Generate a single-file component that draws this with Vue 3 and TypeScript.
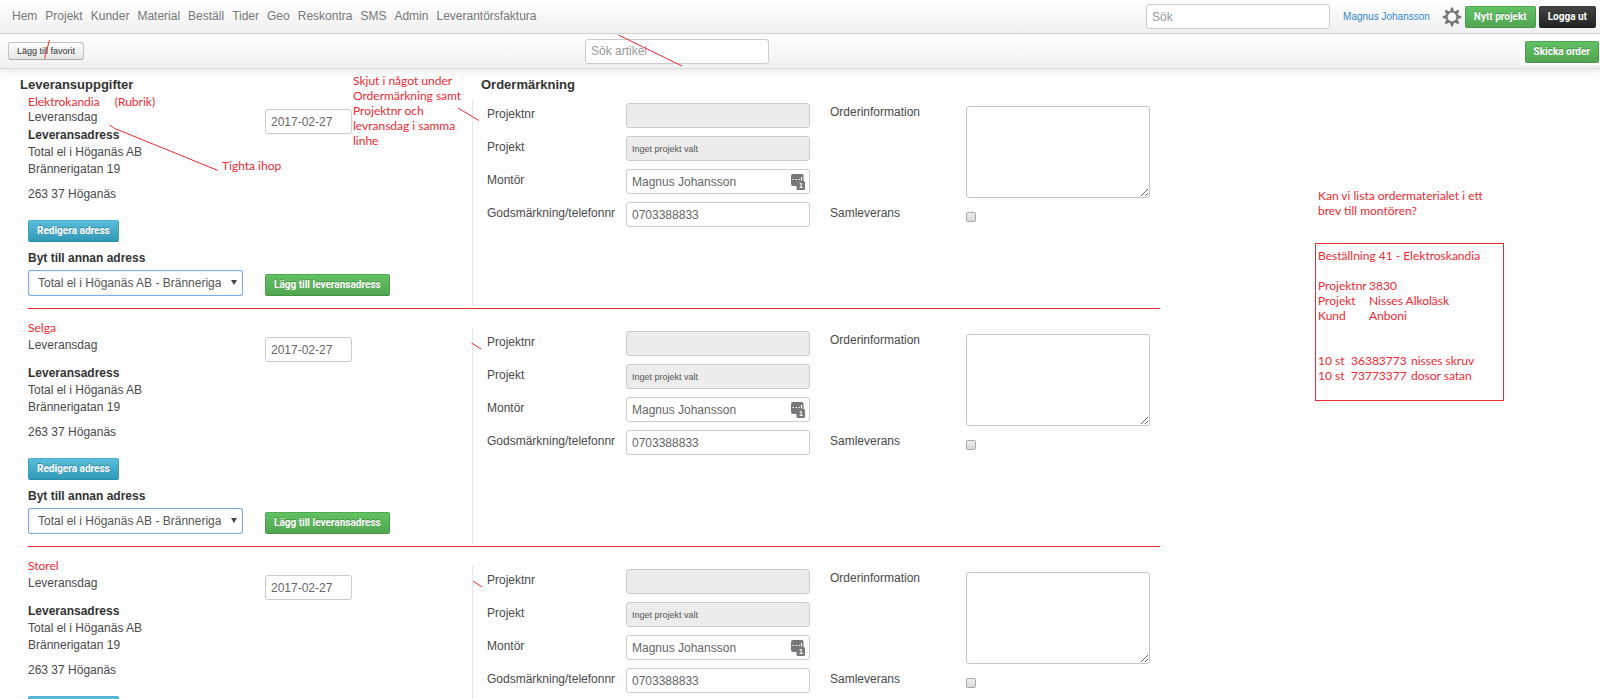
<script setup lang="ts">
interface Order {
  id: string
  supplier: string
  remark?: string
  compact: boolean
}

const menu: string[] = [
  'Hem', 'Projekt', 'Kunder', 'Material', 'Beställ', 'Tider',
  'Geo', 'Reskontra', 'SMS', 'Admin', 'Leverantörsfaktura',
]

const orders: Order[] = [
  { id: 'o1', supplier: 'Elektrokandia', remark: '(Rubrik)', compact: true },
  { id: 'o2', supplier: 'Selga', compact: false },
  { id: 'o3', supplier: 'Storel', compact: false },
]

const letterHead: [string, string][] = [
  ['Projektnr', '3830'],
  ['Projekt', 'Nisses Alkoläsk'],
  ['Kund', 'Anboni'],
]

const letterRows: [string, string, string][] = [
  ['10 st', '36383773', 'nisses skruv'],
  ['10 st', '73773377', 'dosor satan'],
]
</script>

<template>
  <div class="page">
    <header class="top">
      <div class="bar">
        <nav class="menu">
          <a v-for="item in menu" :key="item" href="#">{{ item }}</a>
        </nav>
        <div class="account">
          <input class="field search" type="text" placeholder="Sök" aria-label="Sök" />
          <a class="user" href="#">Magnus Johansson</a>
          <button class="gear" type="button" aria-label="Inställningar">
            <svg viewBox="0 0 20 20" width="20" height="20">
              <g fill="#777">
                <path
                  v-for="n in 8"
                  :key="n"
                  d="M7.800 4.600 L9.200 .6 h1.600 L12.200 4.600 Z"
                  :transform="`rotate(${n * 45} 10 10)`"
                />
              </g>
              <circle cx="10" cy="10" r="5.3" fill="#fafafa" stroke="#777" stroke-width="1.8" />
            </svg>
          </button>
          <button class="btn green" type="button">Nytt projekt</button>
          <button class="btn dark" type="button">Logga ut</button>
        </div>
      </div>
      <div class="bar sub">
        <div class="side">
          <button class="favorite" type="button">Lägg till favorit</button>
        </div>
        <input class="field search" type="text" placeholder="Sök artikel" aria-label="Sök artikel" />
        <div class="send">
          <button class="btn green" type="button">Skicka order</button>
        </div>
      </div>
    </header>

    <div class="content">
      <main class="orders">
        <div class="headings">
          <h2>Leveransuppgifter</h2>
          <h2>Ordermärkning</h2>
        </div>

        <section
          v-for="order in orders"
          :key="order.id"
          class="order"
          :class="{ compact: order.compact }"
        >
          <div class="delivery">
            <div class="supplier note">
              <span>{{ order.supplier }}</span>
              <span v-if="order.remark">{{ order.remark }}</span>
            </div>
            <div class="details">
              <div class="address">
                <label class="day" :for="order.id + '-day'">Leveransdag</label>
                <h3>Leveransadress</h3>
                <p>Total el i Höganäs AB<br />Brännerigatan 19</p>
                <p class="city">263 37 Höganäs</p>
                <button class="btn blue" type="button">Redigera adress</button>
                <label class="change" :for="order.id + '-adr'">Byt till annan adress</label>
                <span class="picker">
                  <select :id="order.id + '-adr'">
                    <option>Total el i Höganäs AB - Brännerigatan 19</option>
                  </select>
                </span>
              </div>
              <div class="actions">
                <input :id="order.id + '-day'" class="field date" type="text" value="2017-02-27" />
                <button class="btn green" type="button">Lägg till leveransadress</button>
              </div>
            </div>
          </div>

          <div class="marking">
            <div class="fields">
              <label :for="order.id + '-nr'">Projektnr</label>
              <input :id="order.id + '-nr'" class="field" type="text" disabled />
              <label :for="order.id + '-project'">Projekt</label>
              <input :id="order.id + '-project'" class="field small" type="text" value="Inget projekt valt" disabled />
              <label :for="order.id + '-fitter'">Montör</label>
              <span class="filled">
                <input :id="order.id + '-fitter'" class="field" type="text" value="Magnus Johansson" />
                <svg class="fill" viewBox="0 0 14 16" width="14" height="16">
                  <path d="M2 0h9a1.500 1.500 0 0 1 1.500 1.500V7H6v5H2a2 2 0 0 1-2-2V2a2 2 0 0 1 2-2z" fill="#777" />
                  <path d="M1.500 5.500h1.500M4.500 5.500h1.500M7.500 5.500h1.500M10.500 3v3.500" stroke="#fff" stroke-width="1.200" />
                  <rect x="5.500" y="7" width="8.500" height="9" rx="1.500" fill="#777" />
                  <text x="10" y="14" text-anchor="middle">1</text>
                </svg>
              </span>
              <label :for="order.id + '-phone'">Godsmärkning/telefonnr</label>
              <input :id="order.id + '-phone'" class="field" type="text" value="0703388833" />
            </div>
            <div class="extra">
              <label :for="order.id + '-info'">Orderinformation</label>
              <textarea :id="order.id + '-info'"></textarea>
              <label :for="order.id + '-joint'">Samleverans</label>
              <input :id="order.id + '-joint'" class="check" type="checkbox" />
            </div>
          </div>
        </section>
      </main>

      <aside class="letter note">
        <p>Kan vi lista ordermaterialet i ett<br />brev till montören?</p>
        <div class="box">
          <p>Beställning 41 - Elektroskandia</p>
          <table class="head">
            <tbody>
              <tr v-for="row in letterHead" :key="row[0]">
                <th scope="row">{{ row[0] }}</th>
                <td>{{ row[1] }}</td>
              </tr>
            </tbody>
          </table>
          <table class="items">
            <tbody>
              <tr v-for="row in letterRows" :key="row[1]">
                <td v-for="cell in row" :key="cell">{{ cell }}</td>
              </tr>
            </tbody>
          </table>
        </div>
      </aside>
    </div>

    <!-- Review remarks drawn on top of the page -->
    <p class="remark move note">
      Skjut i något under<br />Ordermärkning samt<br />Projektnr och<br />levransdag i samma<br />linhe
    </p>
    <p class="remark tighten note">Tighta ihop</p>
    <svg class="strokes" width="700" height="600" viewBox="0 0 700 600" aria-hidden="true">
      <path
        d="M49.500 40L44.500 58.500M618.500 35L682 66M109.500 125Q114 129 121 131L218 170.500M458 108L479 120.500M471.500 343L481 349M473 581L482 587"
        fill="none"
        stroke="#ee2a33"
        stroke-width="1"
      />
    </svg>
  </div>
</template>

<style>
html {
  scrollbar-width: none;
}
body {
  margin: 0;
  background: #fefefe;
}
</style>

<style scoped>
.page {
  position: relative;
  font: 12px/17px "Liberation Sans", Arial, sans-serif;
  color: #4a4a4a;
}
.page *,
.page *::after {
  box-sizing: border-box;
}
p,
h2,
h3 {
  margin: 0;
}
a {
  text-decoration: none;
}
input,
select,
textarea,
button {
  margin: 0;
  font: inherit;
}

.top {
  position: relative;
  box-shadow: 0 1px 8px rgba(0, 0, 0, 0.12);
}
.bar {
  display: flex;
  align-items: center;
  justify-content: space-between;
  height: 34px;
  padding: 0 4px 0 12px;
  background: linear-gradient(#fff, #f0f0f0);
  border-bottom: 1px solid #d2d2d2;
}
.sub {
  height: 35px;
  justify-content: flex-start;
  padding: 0 0 0 8px;
  border-bottom-color: #dedede;
}
.menu {
  display: flex;
  gap: 8px;
}
.menu a {
  color: #777;
}
.account {
  display: flex;
  align-items: center;
  gap: 3px;
}
.user {
  margin: 0 9px 0 10px;
  font-size: 10px;
  color: #2f86c8;
}
.gear {
  display: flex;
  padding: 0;
  border: 0;
  background: none;
}
.side {
  flex: 0 0 577px;
}
.send {
  display: flex;
  margin-left: auto;
  padding: 3px 1px 2px 5px;
  background: #fff;
}

.field {
  display: block;
  width: 100%;
  height: 25px;
  padding: 0 5px;
  border: 1px solid #ccc;
  border-radius: 3px;
  background: #fff;
  color: #666;
}
.field::placeholder {
  color: #999;
  opacity: 1;
}
.field:disabled {
  background: #ececec;
  color: #555;
}
.search {
  width: 184px;
}
.date {
  width: 87px;
}
.small {
  font-size: 9px;
}
.btn {
  height: 22px;
  padding: 0 8px;
  border: 1px solid transparent;
  border-radius: 2px;
  font: 700 10px/20px Roboto, Arial, sans-serif;
  color: #fff;
  white-space: nowrap;
  text-shadow: 0 -1px 0 rgba(0, 0, 0, 0.25);
}
.green {
  background: linear-gradient(#62c462, #51a351) border-box;
  border-color: #52a852 #4c9f4c #459145;
}
.blue {
  background: linear-gradient(#5bc0de, #2f96b4) border-box;
  border-color: #4fb0cf #3c9fbd #2c8ba8;
}
.dark {
  background: linear-gradient(#444, #222) border-box;
  border-color: #3c3c3c #2c2c2c #1c1c1c;
}
.favorite {
  display: block;
  height: 18px;
  padding: 0 8px;
  border: 1px solid #c4c4c4;
  border-bottom-color: #aaa;
  border-radius: 3px;
  background: linear-gradient(#fff, #e6e6e6);
  font-size: 9px;
  line-height: 16px;
  color: #333;
}

.content {
  display: flex;
  align-items: flex-start;
}
.orders {
  flex: 0 1 1160px;
}
.headings {
  display: grid;
  grid-template-columns: 461px 1fr;
  padding: 6px 0 0 20px;
}
h2 {
  font-size: 13px;
  line-height: 20px;
  color: #333;
}
.order {
  display: grid;
  grid-template-columns: 444px 1fr;
  margin-left: 28px;
  padding: 12px 0 2px;
  border-bottom: 1px solid #ee2a33;
}
.compact {
  padding-top: 0;
}
.delivery {
  padding-bottom: 10px;
}
.supplier {
  display: flex;
  gap: 15px;
  margin-bottom: 2px;
  line-height: 14px;
}
.compact .supplier {
  margin-bottom: 0;
}
.details {
  display: grid;
  grid-template-columns: 237px 1fr;
}
.address {
  display: flex;
  flex-direction: column;
  align-items: flex-start;
}
.day {
  margin-bottom: 12px;
  line-height: 16px;
}
.compact .day {
  margin-bottom: 2px;
}
h3,
.change {
  font-size: 12px;
  font-weight: bold;
  color: #333;
}
.city {
  margin: 8px 0 17px;
}
.change {
  margin: 8px 0 3px;
}
.picker {
  position: relative;
  width: 215px;
}
.picker::after {
  content: "";
  position: absolute;
  top: 10px;
  right: 6px;
  border: 3px solid transparent;
  border-top: 5px solid #444;
  border-bottom: 0;
}
select {
  display: block;
  width: 100%;
  height: 26px;
  padding: 0 21px 0 9px;
  appearance: none;
  border: 1px solid #7ea9ee;
  border-radius: 2px;
  box-shadow: inset 0 0 1px #7ea9ee;
  background: #fff;
  color: #555;
}
.actions {
  display: flex;
  flex-direction: column;
  align-items: flex-start;
  justify-content: space-between;
}

.marking {
  display: grid;
  grid-template-columns: 323px 1fr;
  gap: 20px;
  margin-top: 7px;
  padding: 3px 0 0 14px;
  border-left: 1px solid #e6e6e6;
}
.compact .marking {
  margin-top: 5px;
}
.fields {
  display: grid;
  grid-template-columns: 139px 184px;
  grid-auto-rows: 25px;
  row-gap: 8px;
}
.fields label {
  padding-top: 3px;
}
.filled {
  position: relative;
}
.fill {
  position: absolute;
  top: 5px;
  right: 5px;
}
.fill text {
  font: bold 7px "Liberation Sans", Arial, sans-serif;
  fill: #fff;
}
.extra {
  display: grid;
  grid-template-columns: 136px 184px;
  grid-template-rows: 101px 17px;
}
.extra label {
  padding-top: 1px;
}
textarea {
  width: 100%;
  height: 92px;
  margin-top: 3px;
  border: 1px solid #c6c6c6;
  border-radius: 3px;
  background: #fff;
}
.check {
  width: 10px;
  height: 10px;
  margin-top: 8px;
  appearance: none;
  border: 1px solid #aaa;
  border-radius: 2px;
  background: linear-gradient(#eee, #d8d8d8);
}

.note {
  font-family: Lato, Calibri, sans-serif;
  font-size: 12px;
  color: #ee2a33;
}
.letter {
  margin: 119px 96px 0 155px;
  line-height: 15px;
  white-space: nowrap;
}
.letter > p {
  padding-left: 3px;
}
.box {
  width: 189px;
  margin-top: 25px;
  padding: 4px 2px 17px;
  border: 1px solid #ee2a33;
}
table {
  border-collapse: collapse;
}
th,
td {
  padding: 0;
  font-weight: normal;
  text-align: left;
}
.head {
  margin: 15px 0 30px;
}
.head th {
  min-width: 51px;
}
.items td:first-child {
  min-width: 33px;
}
.items td:nth-child(2) {
  min-width: 60px;
}
.remark {
  position: absolute;
  line-height: 15px;
  white-space: nowrap;
}
.move {
  top: 73px;
  left: 353px;
}
.tighten {
  top: 158px;
  left: 222px;
}
.strokes {
  position: absolute;
  top: 0;
  left: 0;
  pointer-events: none;
}
</style>
